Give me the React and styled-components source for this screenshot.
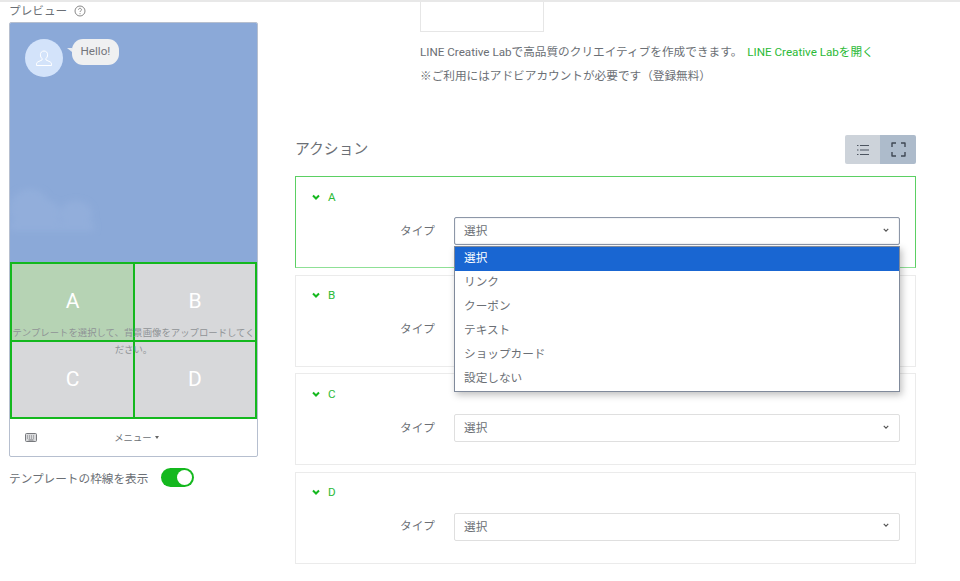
import React from "react";
import styled, { createGlobalStyle } from "styled-components";

const Global = createGlobalStyle`
  html, body { margin: 0; padding: 0; background: #fff; height: 581px; overflow: hidden; }
  body { font-family: Roboto, "Noto Sans CJK JP", sans-serif; font-size: 11.65px; color: #6b6f75; }
  * { box-sizing: border-box; }
`;
const Page = styled.div`
  height: 581px; border-top: 2px solid #e8e8e8; padding-left: 9px;
  display: grid; grid-template-columns: 249px 621px; column-gap: 37px; overflow: hidden;
`;
const Left = styled.section`display: flex; flex-direction: column;`;
const PreviewTitle = styled.div`
  height: 20px; display: flex; align-items: center; gap: 7px; line-height: 15px; color: #6b6f75; margin-top: -1px; margin-bottom: 1px;
`;
const Phone = styled.div`
  position: relative; height: 435px; border: 1px solid #b6bfcf; border-radius: 2px; overflow: hidden;
  display: flex; flex-direction: column; background: #fff;
`;
const Sky = styled.div`
  position: relative; height: 239px; background: #8ba9d8; padding: 16px 15px;
  display: flex; align-items: flex-start; gap: 9px;
`;
const Avatar = styled.div`
  width: 38px; height: 38px; border-radius: 50%; background: #d3e3fa;
  display: flex; align-items: center; justify-content: center; flex: none;
`;
const Bubble = styled.div`
  position: relative; height: 26px; padding: 0 8.5px; border-radius: 11px; background: #eff0f1; color: #73767c;
  line-height: 25px;
  &::before { content: ""; position: absolute; left: -5px; top: 9px; border-left: 5px solid transparent; border-top: 4px solid #e6eaf1; border-bottom: 2px solid transparent; }
`;
const Clouds = styled.svg`position: absolute; left: 0; bottom: 20px;`;
const TileGrid = styled.div`
  position: relative; display: grid; grid-template-columns: 123px 120px; grid-template-rows: 78px 75px; height: 157px;
  width: 247px; border: 2px solid #14b81e; background: #d7d8da;
`;
const Tile = styled.div`
  display: flex; align-items: center; justify-content: center; color: #fff; font-size: 21px; padding-bottom: 2px;
  background: ${p => p.$active ? "#b6d3b4" : "transparent"};
  border-right: ${p => p.$right ? "2px solid #14b81e" : "0"};
  border-bottom: ${p => p.$bottom ? "2px solid #14b81e" : "0"};
`;
const Hint = styled.div`
  position: absolute; left: 0; right: 0; top: 60px; text-align: center; font-size: 9.4px; line-height: 17px; color: #8f9396;
`;
const Footer = styled.div`
  flex: 1; display: flex; align-items: center; padding: 0 15px; font-size: 9.4px; color: #6b6f75;
`;
const MenuLabel = styled.div`
  flex: 1; display: flex; justify-content: center; align-items: center; gap: 3px; padding-right: 6px; padding-bottom: 1px;
`;
const Caret = styled.span`border-left: 2px solid transparent; border-right: 2px solid transparent; border-top: 3px solid #666;`;
const ToggleRow = styled.div`display: flex; align-items: center; gap: 13px; height: 22px; margin-top: 9px; color: #6b6f75;`;
const Toggle = styled.div`
  width: 33px; height: 19px; border-radius: 10px; background: #14b81e; padding: 2px; display: flex; justify-content: flex-end;
  &::after { content: ""; width: 15px; height: 15px; background: #fff; border-radius: 50%; }
`;
const Right = styled.section`display: flex; flex-direction: column;`;
const Thumb = styled.div`
  width: 124px; height: 30px; margin-left: 125px; border: 1px solid #e6e6e6; border-top: 0; flex: none;
`;
const Note = styled.p`
  margin: 0 0 0 125px; line-height: 24px; color: #6b6f75; height: 24px; white-space: nowrap;
  &:first-of-type { margin-top: 8px; }
`;
const GreenLink = styled.a`color: #2cba37; margin-left: 5px;`;
const ActionHead = styled.div`
  display: flex; justify-content: space-between; align-items: center; margin-top: 47px; height: 29px; margin-bottom: 12px;
`;
const H2 = styled.h2`margin: 0 0 5px; font-size: 14.8px; font-weight: 400; color: #6b6f75;`;
const Switcher = styled.div`display: flex; border-radius: 2px; overflow: hidden;`;
const SwitchBtn = styled.div`
  width: ${p => p.$w}px; height: 29px; background: ${p => p.$on ? "#adbbcb" : "#cdd3da"};
  display: flex; align-items: center; justify-content: center;
`;
const Cards = styled.div`display: flex; flex-direction: column; gap: 6.67px;`;
const Card = styled.div`
  position: relative; height: 92px; border: 1px solid ${p => p.$active ? "#5bd063" : "#ebebeb"};
  border-bottom-color: ${p => p.$active ? "#8fe096" : "#ebebeb"};
  padding: 13px 15px 0 16px;
`;
const CardHead = styled.div`display: flex; align-items: center; gap: 8px; height: 13px; color: #2cba37;`;
const Row = styled.div`display: flex; align-items: center; justify-content: flex-end; gap: 19px; margin-top: 14px;`;
const RowLabel = styled.span`color: #6b6f75; margin-bottom: 4px;`;
const SelectBox = styled.div`
  width: 446px; height: 28px; border: 1px solid ${p => p.$open ? "#8d97a8" : "#dfdfdf"}; border-radius: 2px;
  ${p => p.$open ? "box-shadow: inset 0 0 1px #8d97a8;" : ""}
  display: flex; align-items: center; justify-content: space-between; padding: 0 10px 3px 9px; color: #6b6f75; background: #fff;
`;
const Dropdown = styled.ul`
  position: absolute; left: 158px; top: 69px; width: 446px; margin: 0; padding: 0; list-style: none; z-index: 5;
  background: #fff; border: 1px solid #808a9b; box-shadow: 2px 3px 7px rgba(0,0,0,.25);
`;
const Option = styled.li`
  height: 24px; line-height: 23px; padding-left: 9px;
  background: ${p => p.$sel ? "#1966d2" : "#fff"}; color: ${p => p.$sel ? "#fff" : "#6b6f75"};
`;
const Chev = ({ c = "#14b81e", w = 2, size = 8 }) => (
  <svg width={size} height="6" viewBox="0 0 8 6" fill="none"><path d="M1 1.5 4 4.5 7 1.5" stroke={c} strokeWidth={w} /></svg>
);
const opts = ["選択", "リンク", "クーポン", "テキスト", "ショップカード", "設定しない"];
const ActionCard = ({ name, open }) => (
  <Card $active={open}>
    <CardHead><Chev /><span>{name}</span></CardHead>
    <Row>
      <RowLabel>タイプ</RowLabel>
      <SelectBox $open={open}>選択<Chev c="#555" w={1.6} size={6} /></SelectBox>
    </Row>
    {open && <Dropdown>{opts.map((o, i) => <Option key={o} $sel={i === 0}>{o}</Option>)}</Dropdown>}
  </Card>
);
export default function App() {
  return (
    <>
      <Global />
      <Page>
        <Left>
          <PreviewTitle>
            プレビュー
            <svg width="12" height="12" viewBox="0 0 12 12" fill="none" stroke="#888"><circle cx="6" cy="6" r="5" /><path d="M4.5 4.8c0-2 3-2 3 0 0 1-1.500 1-1.500 2.200M6 8.200v1" /></svg>
          </PreviewTitle>
          <Phone>
            <Sky>
              <Clouds width="100" height="60" viewBox="0 0 100 60">
                <defs><filter id="b"><feGaussianBlur stdDeviation="3" /></filter></defs>
                <g fill="#92aedb" filter="url(#b)">
                  <ellipse cx="20" cy="27" rx="20" ry="20" />
                  <ellipse cx="40" cy="32" rx="10" ry="13" />
                  <ellipse cx="66" cy="32" rx="16" ry="13" />
                  <rect x="0" y="40" width="84" height="9" />
                </g>
              </Clouds>
              <Avatar>
                <svg width="16" height="17" viewBox="0 0 16 17" fill="none" stroke="#fff" strokeWidth="1">
                  <path d="M8 1c2.300 0 3.600 1.700 3.600 3.800 0 1.600-.7 3-1.700 3.800v1.300l4.400 2.100c1 .5 1.200 1.300 1.200 3.500H.5c0-2.200.2-3 1.200-3.500l4.400-2.100V8.600C5.100 7.800 4.400 6.400 4.400 4.800 4.400 2.700 5.700 1 8 1Z" />
                </svg>
              </Avatar>
              <Bubble>Hello!</Bubble>
            </Sky>
            <TileGrid>
              <Tile $active $right $bottom>A</Tile>
              <Tile $bottom>B</Tile>
              <Tile $right>C</Tile>
              <Tile>D</Tile>
              <Hint>テンプレートを選択して、背景画像をアップロードしてください。</Hint>
            </TileGrid>
            <Footer>
              <svg width="12" height="9" viewBox="0 0 12 9"><rect x=".5" y=".5" width="11" height="8" rx="1" fill="#d9dadc" stroke="#77797d" /><path d="M2 3h8M2 5h8" stroke="#77797d" strokeDasharray="1 1" /><path d="M3.500 7h5" stroke="#77797d" /></svg>
              <MenuLabel>メニュー<Caret /></MenuLabel>
            </Footer>
          </Phone>
          <ToggleRow>テンプレートの枠線を表示<Toggle /></ToggleRow>
        </Left>
        <Right>
          <Thumb />
          <Note>LINE Creative Labで高品質のクリエイティブを作成できます。<GreenLink>LINE Creative Labを開く</GreenLink></Note>
          <Note>※ご利用にはアドビアカウントが必要です（登録無料）</Note>
          <ActionHead>
            <H2>アクション</H2>
            <Switcher>
              <SwitchBtn $w={35}>
                <svg width="12" height="12" viewBox="0 0 12 12" stroke="#4d5560" strokeWidth="1.200" fill="none"><path d="M3 1.500H12M3 6H12M3 10.500H12M0 1.500h1.500M0 6h1.500M0 10.500h1.500" /></svg>
              </SwitchBtn>
              <SwitchBtn $w={36} $on>
                <svg width="15" height="15" viewBox="0 0 15 15" stroke="#3f4854" strokeWidth="1.400" strokeLinejoin="round" fill="none"><path d="M1 5V1h4M10 1h4v4M14 10v4h-4M5 14H1v-4" /></svg>
              </SwitchBtn>
            </Switcher>
          </ActionHead>
          <Cards>
            <ActionCard name="A" open />
            <ActionCard name="B" />
            <ActionCard name="C" />
            <ActionCard name="D" />
          </Cards>
        </Right>
      </Page>
    </>
  );
}
